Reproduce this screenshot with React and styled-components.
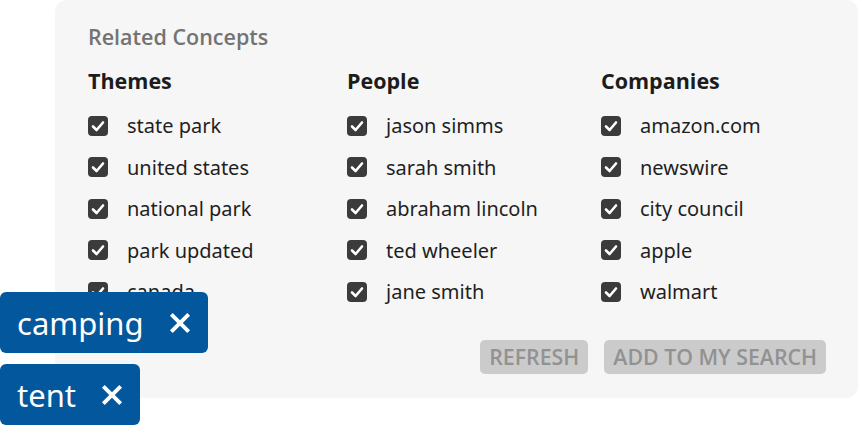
import React from 'react'
import styled, { createGlobalStyle } from 'styled-components'

const GlobalStyle = createGlobalStyle`
  body {
    margin: 0;
    background: #ffffff;
    font-family: 'Open Sans', 'Noto Sans', Arial, sans-serif;
  }
`

const columns = [
  { title: 'Themes', items: ['state park', 'united states', 'national park', 'park updated', 'canada'] },
  { title: 'People', items: ['jason simms', 'sarah smith', 'abraham lincoln', 'ted wheeler', 'jane smith'] },
  { title: 'Companies', items: ['amazon.com', 'newswire', 'city council', 'apple', 'walmart'] },
]

const tags = ['camping', 'tent']

export default function App() {
  return (
    <>
      <GlobalStyle />
      <Page>
        <Panel>
          <Title>Related Concepts</Title>
          <Columns>
            {columns.map((col) => (
              <Column key={col.title}>
                <Heading>{col.title}</Heading>
                <List>
                  {col.items.map((item) => (
                    <Row key={item}>
                      <CheckBox />
                      <Label>{item}</Label>
                    </Row>
                  ))}
                </List>
              </Column>
            ))}
          </Columns>
          <Actions>
            <Button>REFRESH</Button>
            <Button>ADD TO MY SEARCH</Button>
          </Actions>
        </Panel>
        <TagStack>
          {tags.map((t) => (
            <Tag key={t}>
              {t}
              <CloseIcon viewBox="0 0 24 24">
                <path d="M4 4 L20 20 M20 4 L4 20" />
              </CloseIcon>
            </Tag>
          ))}
        </TagStack>
      </Page>
    </>
  )
}

const CheckBox = () => (
  <Box>
    <svg viewBox="0 0 20 20" width="20" height="20">
      <path d="M5 10.5 L8.6 14 L15 6.5" fill="none" stroke="#fff" strokeWidth="2.6" strokeLinecap="round" strokeLinejoin="round" />
    </svg>
  </Box>
)

const Page = styled.div`
  position: relative;
  width: 859px;
  height: 426px;
  overflow: hidden;
`

const Panel = styled.div`
  margin-left: 55px;
  width: 803px;
  height: 398px;
  box-sizing: border-box;
  background: #f6f6f6;
  border-radius: 12px;
  padding: 22px 33px 0 33px;
  display: flex;
  flex-direction: column;
`

const Title = styled.div`
  font-size: 21.5px;
  font-weight: 600;
  color: #737373;
  line-height: 30px;
`

const Columns = styled.div`
  display: grid;
  grid-template-columns: 259px 254px 1fr;
  margin-top: 14px;
`

const Column = styled.div`
  display: flex;
  flex-direction: column;
`

const Heading = styled.div`
  font-size: 21.5px;
  font-weight: 700;
  color: #1c1c1c;
  line-height: 30px;
`

const List = styled.div`
  display: flex;
  flex-direction: column;
  margin-top: 9px;
`

const Row = styled.div`
  display: flex;
  align-items: center;
  height: 41.5px;
`

const Box = styled.span`
  width: 20px;
  height: 20px;
  border-radius: 4px;
  background: #3b3b3b;
  display: inline-flex;
  flex-shrink: 0;
`

const Label = styled.span`
  margin-left: 19px;
  font-family: 'Noto Sans', 'Open Sans', sans-serif;
  font-size: 20px;
  color: #1f1f1f;
`

const Actions = styled.div`
  display: flex;
  justify-content: flex-end;
  gap: 16px;
  margin-top: 27px;
  margin-right: -1px;
`

const Button = styled.div`
  background: #cbcbcb;
  color: #929292;
  font-size: 21.3px;
  font-weight: 600;
  line-height: 34px;
  padding: 0 9px;
  border-radius: 5px;
`

const TagStack = styled.div`
  position: absolute;
  left: 0;
  top: 292px;
  display: flex;
  flex-direction: column;
  align-items: flex-start;
  gap: 11px;
`

const Tag = styled.div`
  display: flex;
  align-items: center;
  height: 61px;
  box-sizing: border-box;
  padding: 0 15px 0 17px;
  background: #03579c;
  color: #ffffff;
  border-radius: 6px;
  font-family: 'Noto Sans', 'Open Sans', sans-serif;
  font-size: 31px;
  gap: 23px;
`

const CloseIcon = styled.svg`
  width: 26px;
  height: 26px;
  stroke: #ffffff;
  stroke-width: 3.6;
  fill: none;
`
